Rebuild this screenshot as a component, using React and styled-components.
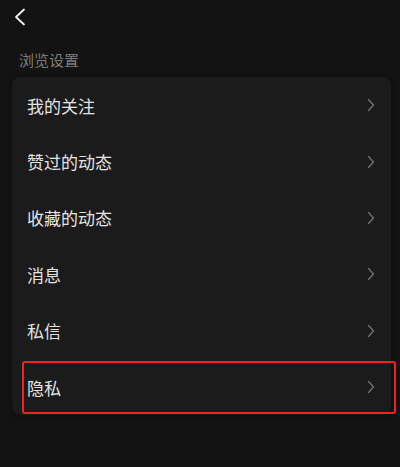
import React from 'react';
import styled, { createGlobalStyle } from 'styled-components';

const GlobalStyle = createGlobalStyle`
  html, body {
    margin: 0;
    padding: 0;
    background: #131313;
  }
  body {
    font-family: "Noto Sans CJK SC", "Noto Sans", sans-serif;
    color: #e2e2e2;
  }
`;

const Page = styled.div`
  width: 400px;
  height: 467px;
  overflow: hidden;
  background: #131313;
  display: flex;
  flex-direction: column;
`;

const TopBar = styled.div`
  height: 34px;
  display: flex;
  align-items: center;
  padding-left: 14px;
`;

const BackButton = styled.svg`
  width: 12px;
  height: 18px;
`;

const SectionTitle = styled.div`
  padding: 16px 0 0 19px;
  height: 27px;
  font-size: 15px;
  line-height: 20px;
  color: #7c7c7c;
`;

const Card = styled.div`
  margin: 0 9px 0 12px;
  background: #1b1b1b;
  border-radius: 8px;
  box-shadow: 0 0 6px rgba(0, 0, 0, 0.45);
  display: flex;
  flex-direction: column;
`;

const Row = styled.div`
  position: relative;
  height: 56.4px;
  display: flex;
  align-items: center;
  justify-content: space-between;
  padding: 0 16px 0 15px;
  font-size: 17px;
  color: #e4e4e4;
`;

const Highlight = styled.div`
  position: absolute;
  left: 10px;
  right: -5px;
  top: 2px;
  bottom: 1px;
  border: 2.5px solid #f2231c;
  border-radius: 3px;
  pointer-events: none;
`;

const Chevron = styled.svg`
  width: 8px;
  height: 14px;
`;

const items = ['我的关注', '赞过的动态', '收藏的动态', '消息', '私信', '隐私'];

const ChevronRight = () => (
  <Chevron viewBox="0 0 8 14">
    <path d="M1.5 1.5 L6.5 7 L1.5 12.5" fill="none" stroke="#707070" strokeWidth="1.4" strokeLinecap="round" strokeLinejoin="round" />
  </Chevron>
);

const App = () => (
  <>
    <GlobalStyle />
    <Page>
      <TopBar>
        <BackButton viewBox="0 0 12 18">
          <path d="M10 1.5 L2 9 L10 16.5" fill="none" stroke="#f2f2f2" strokeWidth="1.8" strokeLinecap="round" strokeLinejoin="round" />
        </BackButton>
      </TopBar>
      <SectionTitle>浏览设置</SectionTitle>
      <Card>
        {items.map((label, i) => (
          <Row key={label}>
            <span>{label}</span>
            <ChevronRight />
            {i === items.length - 1 && <Highlight />}
          </Row>
        ))}
      </Card>
    </Page>
  </>
);

export default App;
